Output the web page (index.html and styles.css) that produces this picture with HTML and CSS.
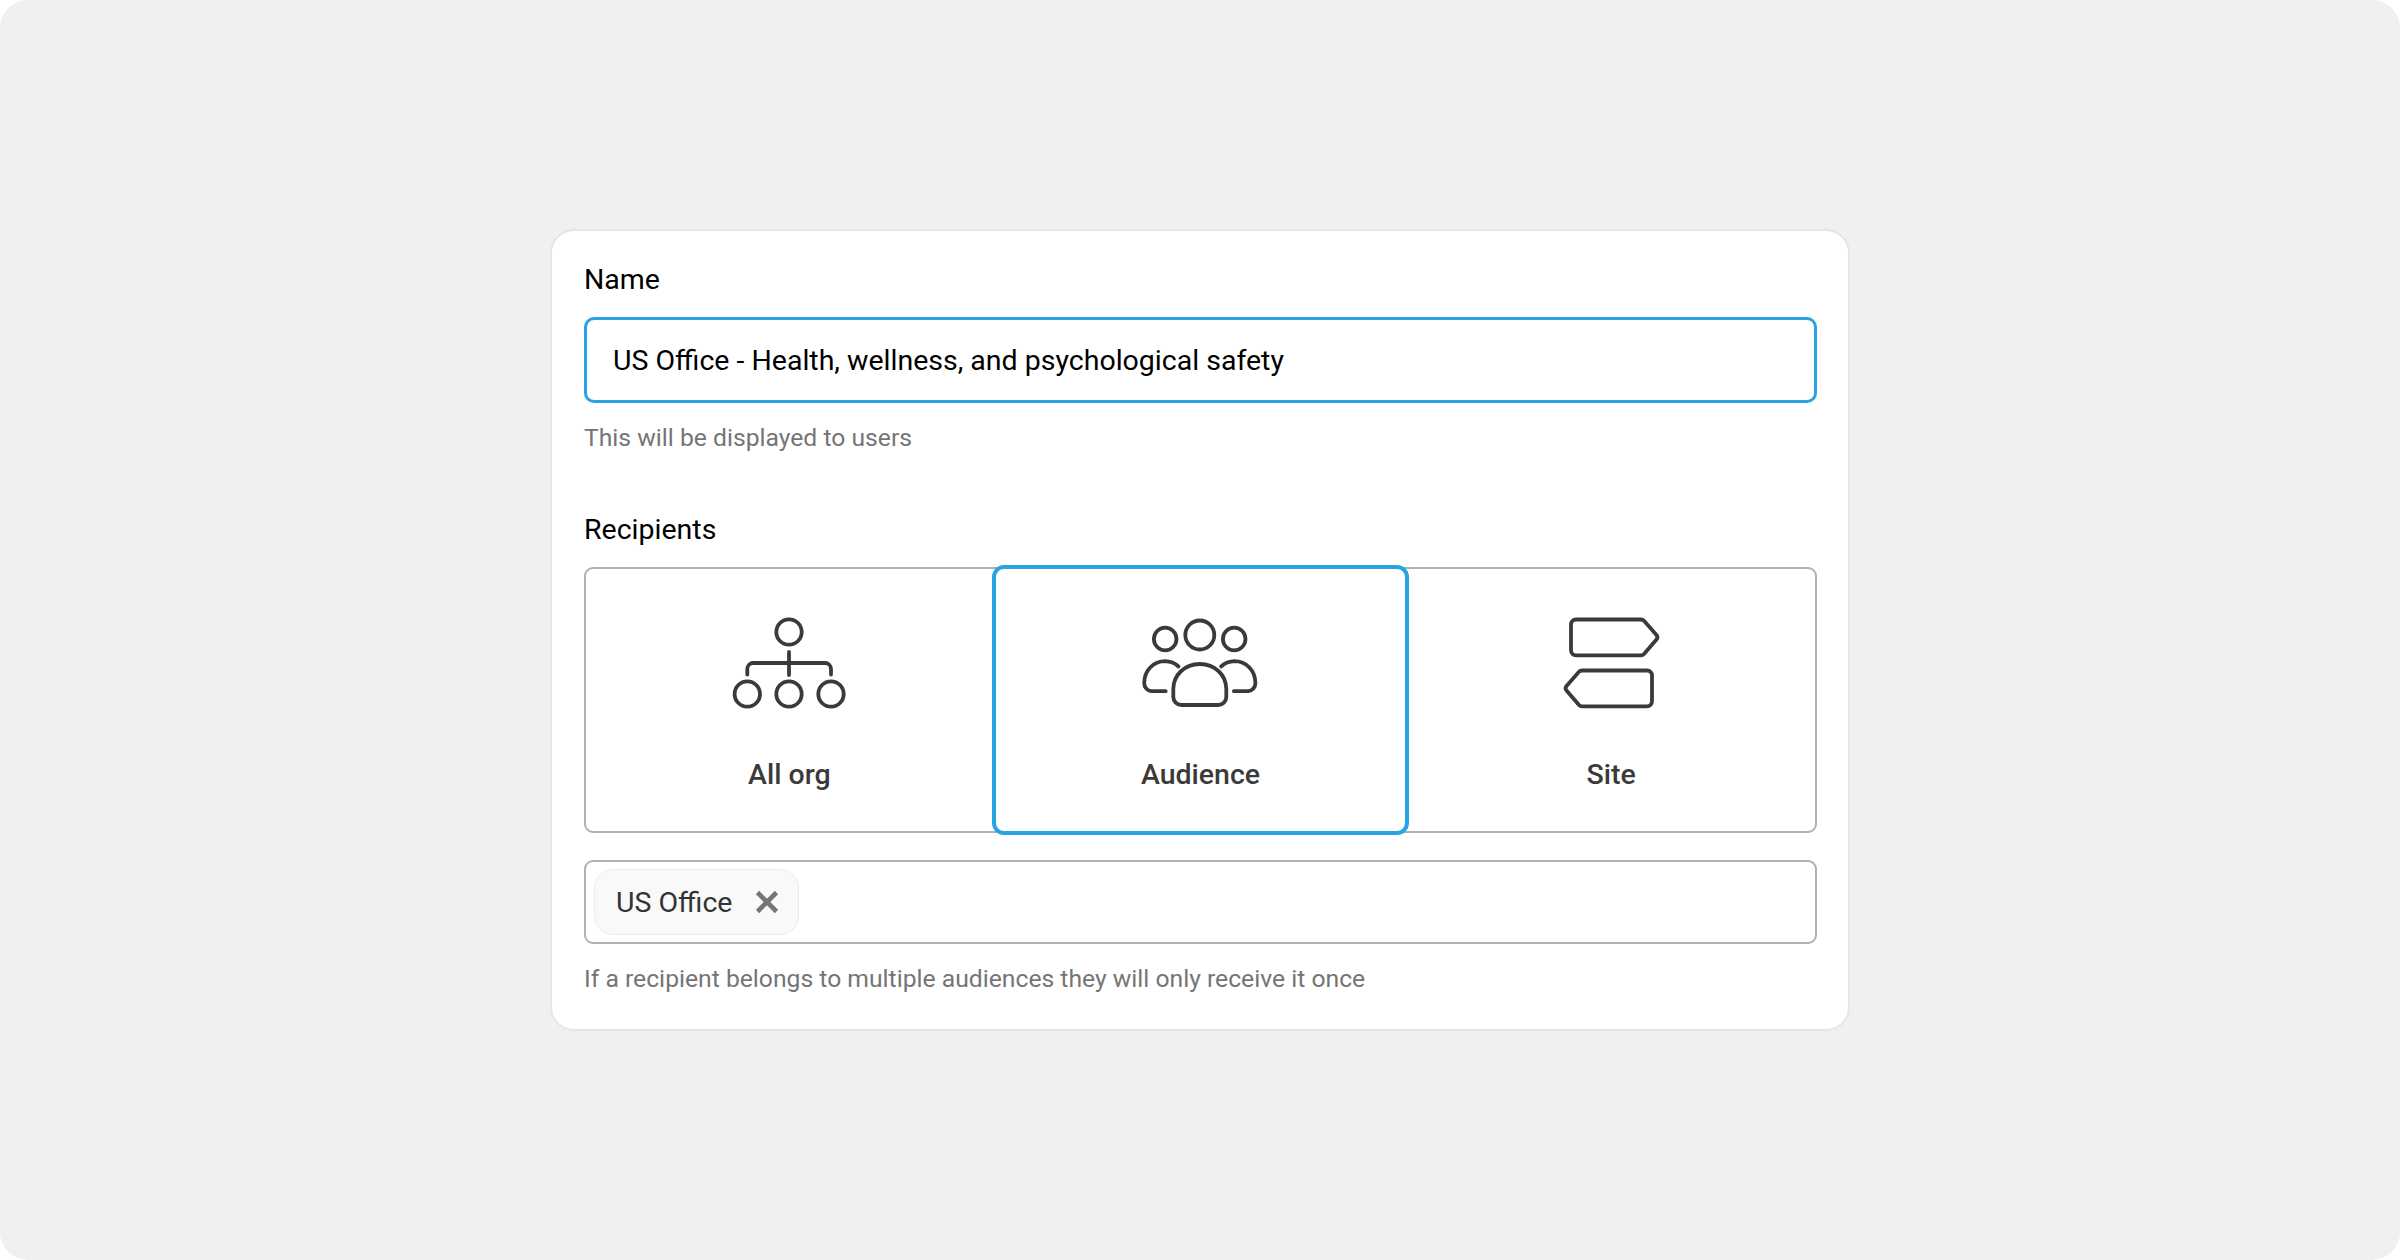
FILE: index.html
```html
<!DOCTYPE html>
<html lang="en">
<head>
<meta charset="utf-8">
<title>Recipients form</title>
<link rel="stylesheet" href="styles.css">
</head>
<body>
<main class="stage">
  <form class="card">
    <section class="field name-field">
      <div class="label">Name</div>
      <div class="text-input">US Office - Health, wellness, and psychological safety</div>
      <div class="hint">This will be displayed to users</div>
    </section>
    <section class="field">
      <div class="label">Recipients</div>
      <div class="tiles">
        <div class="tile first">
          <svg class="tile-icon" width="120" height="100" viewBox="729 612 120 100" fill="none" stroke="#3a3a3a" stroke-width="3.8" stroke-linecap="round" stroke-linejoin="round">
            <circle cx="789" cy="632" r="12.7"/>
            <circle cx="747.3" cy="694" r="12.7"/>
            <circle cx="789" cy="694" r="12.7"/>
            <circle cx="831" cy="694" r="12.7"/>
            <path d="M789 652v23M747.3 674.500v-5.500a6 6 0 0 1 6-6h71.700a6 6 0 0 1 6 6v5.500"/>
          </svg>
          <span class="tile-name">All org</span>
        </div>
        <div class="tile selected">
          <svg class="tile-icon" width="120" height="100" viewBox="1140.500 612 120 100" fill="none" stroke="#3a3a3a" stroke-width="3.8" stroke-linecap="round" stroke-linejoin="round">
            <circle cx="1200.300" cy="635" r="14.500"/>
            <circle cx="1165.700" cy="639" r="11.300"/>
            <circle cx="1234.700" cy="639" r="11.300"/>
            <path d="M1179 666.500a21 21 0 0 0-13.300-5.300c-12 0-21 9.500-21 22a8 8 0 0 0 7 8h14.500"/>
            <path d="M1221.600 666.500a21 21 0 0 1 13.300-5.300c12 0 21 9.500 21 22a8 8 0 0 1-7 8h-14.500"/>
            <path d="M1200.300 664c15 0 26.500 11 26.500 25v8a8 8 0 0 1-8 8h-37a8 8 0 0 1-8-8v-8c0-14 11.500-25 26.500-25z"/>
          </svg>
          <span class="tile-name">Audience</span>
        </div>
        <div class="tile last">
          <svg class="tile-icon" width="120" height="100" viewBox="1551 612 120 100" fill="none" stroke="#3a3a3a" stroke-width="3.8" stroke-linecap="round" stroke-linejoin="round">
            <path d="M1576 619.500h65a4 4 0 0 1 3 1.300l12.500 14.200a3.500 3.500 0 0 1 0 4.500l-12.500 14.500a4 4 0 0 1-3 1.300h-65a5 5 0 0 1-5-5v-25.800a5 5 0 0 1 5-5z"/>
            <path d="M1647 670.500h-65a4 4 0 0 0-3 1.300l-12.500 14.200a3.500 3.500 0 0 0 0 4.500l12.500 14.500a4 4 0 0 0 3 1.300h65a5 5 0 0 0 5-5v-25.800a5 5 0 0 0-5-5z"/>
          </svg>
          <span class="tile-name">Site</span>
        </div>
      </div>
      <div class="chip-input">
        <span class="chip">US Office
          <svg class="chip-x" width="24" height="24" viewBox="0 0 24 24" fill="none" stroke="#757575" stroke-width="4.600">
            <path d="M2.500 2.500l19 19M21.500 2.500l-19 19"/>
          </svg>
        </span>
      </div>
      <div class="hint">If a recipient belongs to multiple audiences they will only receive it once</div>
    </section>
  </form>
</main>
</body>
</html>
```
FILE: styles.css
```css
* { box-sizing: border-box; }
html, body { margin: 0; height: 100%; background: #fff; }
body { font-family: Roboto, "Liberation Sans", sans-serif; color: #000; }
.stage {
  height: 1260px;
  background: #f0f0f0;
  border-radius: 28px;
  display: flex;
  align-items: center;
  justify-content: center;
}
.card {
  width: 1300px;
  height: 802px;
  background: #fff;
  border: 2px solid #e6e6e6;
  border-radius: 24px;
  padding: 32px 31px 32px 32px;
  display: flex;
  flex-direction: column;
  gap: 60px;
}
.label { font-size: 28.5px; line-height: 34px; }
.text-input {
  margin-top: 20px;
  height: 86px;
  border: 3.500px solid #27a4e3;
  border-radius: 10px;
  padding: 0 26px;
  display: flex;
  align-items: center;
  font-size: 28.5px;
}
.hint { margin-top: 20px; font-size: 24.7px; line-height: 30px; color: #757575; }
.tiles {
  margin-top: 20px;
  height: 266px;
  border: 2px solid #b0b0b0;
  border-radius: 9px;
  display: grid;
  grid-template-columns: repeat(3, 1fr);
}
.tile {
  display: flex;
  flex-direction: column;
  align-items: center;
  padding-top: 43px;
  font-size: 28.5px;
  color: #3a3a3a;
}
.tile.first { padding-right: 3px; }
.tile.last { padding-left: 2px; }
.tile.selected {
  margin: -4px;
  background: #fff;
  border: 4px solid #27a4e3;
  border-radius: 12px;
}
.tile-icon { display: block; }
.tile-name { margin-top: 45px; font-weight: 500; line-height: 36px; }
.chip-input {
  margin-top: 27px;
  height: 84px;
  border: 2px solid #b0b0b0;
  border-radius: 9px;
  padding: 7px 8px;
  display: flex;
  align-items: center;
}
.chip {
  height: 66px;
  padding: 0 19px 0 21px;
  display: flex;
  align-items: center;
  gap: 23px;
  background: #f9f9f9;
  border: 1px solid #ececec;
  border-radius: 19px;
  font-size: 28.5px;
  color: #333;
}
.chip-x { display: block; }
```
